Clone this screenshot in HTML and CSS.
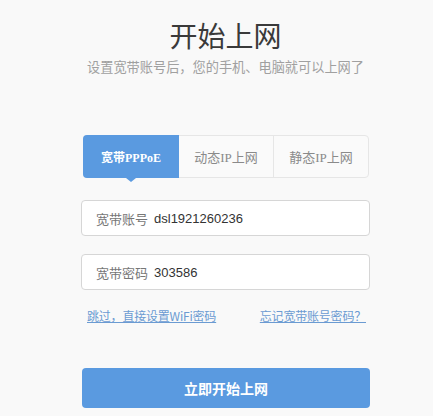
FILE: index.html
```html
<!DOCTYPE html>
<html lang="zh-CN">
<head>
<meta charset="utf-8">
<title>开始上网</title>
<link rel="stylesheet" href="styles.css">
</head>
<body>
<main class="page">
  <header class="head">
    <h1 class="title">开始上网</h1>
    <p class="subtitle">设置宽带账号后，您的手机、电脑就可以上网了</p>
  </header>
  <section class="form">
    <nav class="tabs">
      <div class="tab active">宽带PPPoE</div>
      <div class="tab">动态IP上网</div>
      <div class="tab">静态IP上网</div>
    </nav>
    <div class="field"><span class="label">宽带账号</span><span class="value">dsl1921260236</span></div>
    <div class="field"><span class="label">宽带密码</span><span class="value">303586</span></div>
    <div class="links">
      <a class="link" href="#">跳过，直接设置WiFi密码</a>
      <a class="link" href="#">忘记宽带账号密码？</a>
    </div>
    <button class="submit">立即开始上网</button>
  </section>
</main>
</body>
</html>
```
FILE: styles.css
```css
html, body {
  margin: 0;
  padding: 0;
  background: #f9f9f9;
}
body {
  font-family: "Liberation Sans", "Noto Sans CJK SC", sans-serif;
  color: #333;
}
.page {
  width: 289px;
  margin-left: 81px;
}
.head {
  text-align: center;
}
.title {
  margin: 0;
  padding-top: 17px;
  font-size: 28px;
  line-height: 36px;
  font-weight: normal;
  color: #3a3a3a;
  font-family: "Noto Sans CJK SC", sans-serif;
  letter-spacing: 0;
}
.subtitle {
  margin: 5px 0 0;
  font-size: 13.2px;
  line-height: 18px;
  color: #a0a0a0;
  font-family: "Noto Sans CJK SC", sans-serif;
  white-space: nowrap;
}
.form {
  padding-top: 59px;
}
.tabs {
  display: flex;
  height: 43px;
  box-sizing: border-box;
  border: 1px solid #e6e6e6;
  border-radius: 4px;
  background: #fafafa;
  margin-left: 2px;
  margin-right: 1px;
}
.tab {
  flex: 0 0 auto;
  display: flex;
  align-items: center;
  justify-content: center;
  font-family: "Liberation Serif", "Noto Sans CJK SC", serif;
  font-size: 13px;
  color: #8a8a8a;
}
.tab:nth-child(1) { width: 96px; }
.tab:nth-child(2) { width: 94px; border-right: 1px solid #e6e6e6; }
.tab:nth-child(3) { flex: 1 1 auto; }
.tab.active {
  position: relative;
  margin: -1px 0 -1px -1px;
  background: #5a9ae0;
  color: #fff;
  font-weight: bold;
  font-size: 12px;
  border-radius: 4px 0 0 4px;
}
.tab.active::after {
  content: "";
  position: absolute;
  left: 43px;
  bottom: -4px;
  border-left: 5px solid transparent;
  border-right: 5px solid transparent;
  border-top: 4px solid #5a9ae0;
}
.field {
  display: flex;
  align-items: center;
  height: 36px;
  box-sizing: border-box;
  margin-top: 22px;
  padding-left: 14px;
  background: #fff;
  border: 1px solid #d6d6d6;
  border-radius: 4px;
  font-size: 13px;
}
.field + .field {
  margin-top: 18px;
}
.label {
  color: #777;
  font-family: "Noto Sans CJK SC", sans-serif;
  margin-right: 6px;
}
.value {
  color: #333;
}
.links {
  display: flex;
  justify-content: space-between;
  padding: 17px 4px 0 6px;
  font-size: 12px;
  line-height: 18px;
}
.link {
  color: #6b9bd2;
  text-decoration: underline;
  font-family: "Noto Sans CJK SC", sans-serif;
  letter-spacing: -0.2px;
}
.submit {
  display: block;
  width: 288px;
  height: 40px;
  margin: 43px 0 0 1px;
  border: none;
  border-radius: 4px;
  background: #5a9ae0;
  color: #fff;
  font-family: "Noto Sans CJK SC", sans-serif;
  font-weight: bold;
  font-size: 14px;
}
```
